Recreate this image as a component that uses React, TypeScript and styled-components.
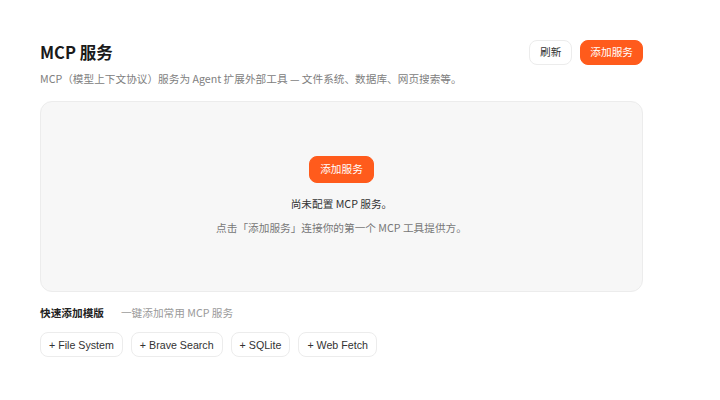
import * as React from 'react';
import styled, { createGlobalStyle } from 'styled-components';

const GlobalStyle = createGlobalStyle`
  html, body {
    margin: 0;
    padding: 0;
    background: #ffffff;
  }
  body {
    font-family: "Noto Sans CJK SC", "Noto Sans", sans-serif;
    -webkit-font-smoothing: antialiased;
  }
`

const Page = styled.div`
  width: 603px;
  padding: 40px 0 0 40px;
`

const Header = styled.div`
  display: flex;
  align-items: center;
  justify-content: space-between;
  height: 25px;
`

const Title = styled.h1`
  margin: 0;
  font-size: 16.5px;
  font-weight: 700;
  color: #1a1a1a;
  line-height: 25px;
`

const Actions = styled.div`
  display: flex;
  gap: 8px;
`

const Button = styled.button<{ $primary?: boolean }>`
  height: 25px;
  padding: 0 ${p => (p.$primary ? '9px' : '10px')};
  border-radius: 8px;
  font-family: "Noto Sans CJK SC", sans-serif;
  font-size: 10.67px;
  line-height: 1;
  cursor: pointer;
  border: 1px solid ${p => (p.$primary ? '#ff5b1c' : '#ececec')};
  background: ${p => (p.$primary ? '#ff5b1c' : '#ffffff')};
  color: ${p => (p.$primary ? '#ffffff' : '#333333')};
`

const Subtitle = styled.p`
  margin: 5px 0 0;
  font-size: 10.67px;
  line-height: 18px;
  color: #808080;
`

const EmptyBox = styled.div`
  margin-top: 13px;
  height: 191px;
  box-sizing: border-box;
  border: 1px solid #ececec;
  border-radius: 12px;
  background: #f7f7f7;
  display: flex;
  flex-direction: column;
  align-items: center;
  justify-content: center;
`

const CenterButton = styled(Button)`
  height: 27px;
  padding: 0 10px;
`

const EmptyTitle = styled.div`
  margin-top: 12px;
  font-size: 10.67px;
  line-height: 18px;
  color: #333333;
`

const EmptyHint = styled.div`
  margin-top: 6px;
  font-size: 10.67px;
  line-height: 18px;
  color: #777777;
`

const QuickHeader = styled.div`
  margin-top: 12px;
  display: flex;
  align-items: baseline;
  gap: 17px;
  line-height: 18px;
`

const QuickTitle = styled.span`
  font-size: 10.67px;
  font-weight: 700;
  color: #222222;
`

const QuickHint = styled.span`
  font-size: 10.67px;
  color: #9a9a9a;
`

const ChipRow = styled.div`
  margin-top: 10px;
  display: flex;
  gap: 8px;
`

const Chip = styled.button`
  height: 25px;
  padding: 0 8px;
  border: 1px solid #ececec;
  border-radius: 8px;
  background: #ffffff;
  font-family: "Liberation Sans", Arial, sans-serif;
  font-size: 10.67px;
  color: #333333;
  cursor: pointer;
`

const templates = ['File System', 'Brave Search', 'SQLite', 'Web Fetch']

const App = () => {
  return (
    <Page>
      <GlobalStyle />
      <Header>
        <Title>MCP 服务</Title>
        <Actions>
          <Button>刷新</Button>
          <Button $primary>添加服务</Button>
        </Actions>
      </Header>
      <Subtitle>
        MCP（模型上下文协议）服务为 Agent 扩展外部工具 — 文件系统、数据库、网页搜索等。
      </Subtitle>
      <EmptyBox>
        <CenterButton $primary>添加服务</CenterButton>
        <EmptyTitle>尚未配置 MCP 服务。</EmptyTitle>
        <EmptyHint>点击「添加服务」连接你的第一个 MCP 工具提供方。</EmptyHint>
      </EmptyBox>
      <QuickHeader>
        <QuickTitle>快速添加模版</QuickTitle>
        <QuickHint>一键添加常用 MCP 服务</QuickHint>
      </QuickHeader>
      <ChipRow>
        {templates.map(t => (
          <Chip key={t}>+ {t}</Chip>
        ))}
      </ChipRow>
    </Page>
  );
}

export default App;
